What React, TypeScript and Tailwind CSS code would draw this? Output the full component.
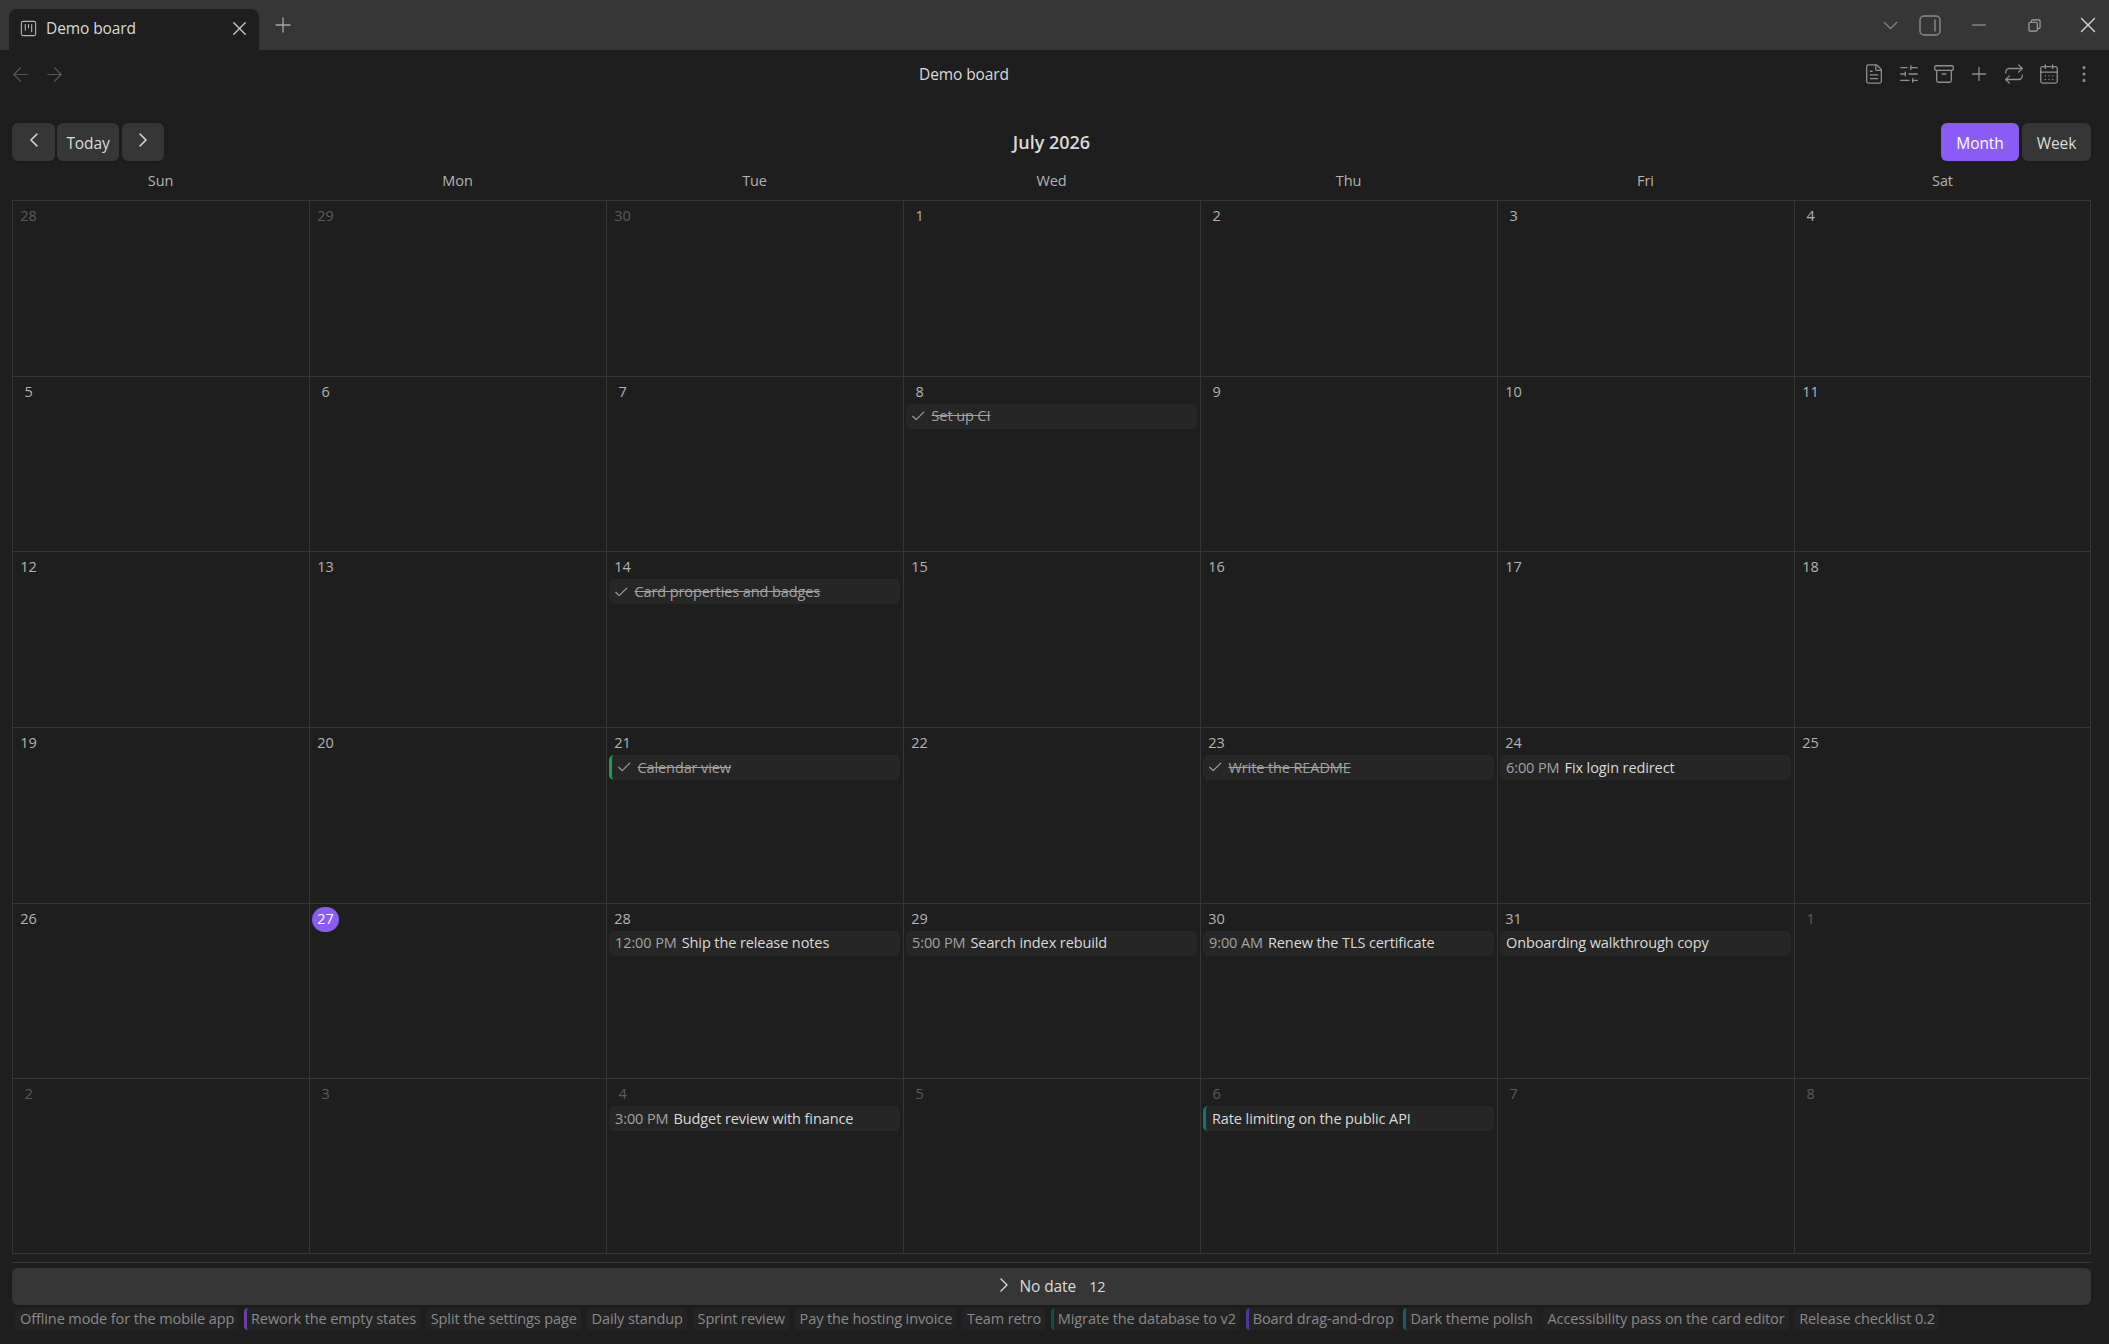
import { useMemo } from "react";
import {
  Archive,
  ArrowLeft,
  ArrowRight,
  CalendarDays,
  Check,
  ChevronDown,
  ChevronLeft,
  ChevronRight,
  EllipsisVertical,
  FileText,
  Minus,
  Plus,
  Repeat,
  SlidersHorizontal,
  SquareKanban,
  X,
} from "lucide-react";

type Task = { title: string; time?: string; done?: boolean; bar?: string };
type Day = { n: number; faded?: boolean; today?: boolean; task?: Task };

const tasks: Record<string, Task> = {
  "7-8": { title: "Set up CI", done: true },
  "7-14": { title: "Card properties and badges", done: true },
  "7-21": { title: "Calendar view", done: true, bar: "border-[#16a34a]" },
  "7-23": { title: "Write the README", done: true },
  "7-24": { title: "Fix login redirect", time: "6:00 PM" },
  "7-28": { title: "Ship the release notes", time: "12:00 PM" },
  "7-29": { title: "Search index rebuild", time: "5:00 PM" },
  "7-30": { title: "Renew the TLS certificate", time: "9:00 AM" },
  "7-31": { title: "Onboarding walkthrough copy" },
  "8-4": { title: "Budget review with finance", time: "3:00 PM" },
  "8-6": { title: "Rate limiting on the public API", bar: "border-[#0f766e]" },
};

const noDate = [
  { title: "Offline mode for the mobile app" },
  { title: "Rework the empty states", bar: "border-[#6b3fa0]" },
  { title: "Split the settings page" },
  { title: "Daily standup" },
  { title: "Sprint review" },
  { title: "Pay the hosting invoice" },
  { title: "Team retro" },
  { title: "Migrate the database to v2", bar: "border-[#134e4a]" },
  { title: "Board drag-and-drop", bar: "border-[#4c3a9a]" },
  { title: "Dark theme polish", bar: "border-[#155e75]" },
  { title: "Accessibility pass on the card editor" },
  { title: "Release checklist 0.2" },
];

const weekdays = ["Sun", "Mon", "Tue", "Wed", "Thu", "Fri", "Sat"];

function buildDays(): Day[] {
  const days: Day[] = [];
  [28, 29, 30].forEach((n) => days.push({ n, faded: true }));
  for (let n = 1; n <= 31; n++) {
    days.push({ n, today: n === 27, task: tasks[`7-${n}`] });
  }
  for (let n = 1; n <= 8; n++) {
    days.push({ n, faded: true, task: tasks[`8-${n}`] });
  }
  return days;
}

function PanelIcon() {
  return (
    <svg width="22" height="21" viewBox="0 0 22 21" fill="none" stroke="#8c8c8c" strokeWidth="1.4">
      <rect x="1" y="1" width="20" height="19" rx="4" />
      <path d="M16 4.5v12" />
    </svg>
  );
}

function RestoreIcon() {
  return (
    <svg width="13" height="13" viewBox="0 0 14 14" fill="none" stroke="#a8a8a8" strokeWidth="1.2">
      <rect x="1" y="3.5" width="9" height="9.5" rx="1.5" />
      <path d="M3.500 3.500V2.500a1.500 1.500 0 0 1 1.500-1.500h6.500A1.500 1.500 0 0 1 13 2.500v6.500a1.500 1.500 0 0 1-1.500 1.500H10" />
    </svg>
  );
}

function TaskChip({ task }: { task: Task }) {
  return (
    <div
      className={`mx-[3px] flex h-[25px] items-center rounded-[5px] bg-[#262626] pl-[6px] ${
        task.bar ? `border-l-[3px] ${task.bar}` : ""
      }`}
    >
      {task.done && <Check size={16.5} strokeWidth={1.6} className="ml-[-2px] mr-[5px] shrink-0 text-[#a3a3a3]" />}
      {task.time && <span className="mr-[5px] text-[#a3a3a3]">{task.time}</span>}
      <span className={task.done ? "text-[#a3a3a3] line-through" : "text-[#dadada]"}>{task.title}</span>
    </div>
  );
}

function DayCell({ day, index }: { day: Day; index: number }) {
  return (
    <div
      className={`min-h-0 border-t border-l border-[#363636] ${index % 7 === 6 ? "border-r" : ""} ${
        index >= 35 ? "border-b" : ""
      }`}
    >
      <div className="flex pl-[2px] pt-[3px]">
        <div
          className={`flex h-[25px] w-[27px] items-center justify-center rounded-full pb-[1px] ${
            day.today ? "bg-[#8a5cf5] text-white" : day.faded ? "text-[#5c5c5c]" : "text-[#b3b3b3]"
          }`}
        >
          {day.n}
        </div>
      </div>
      {day.task && (
        <div className="-ml-px mt-[-1px]">
          <TaskChip task={day.task} />
        </div>
      )}
    </div>
  );
}

export default function App() {
  const days = useMemo(buildDays, []);

  return (
    <div className="flex h-screen w-full flex-col overflow-hidden bg-[#1e1e1e] font-['Open_Sans',sans-serif] text-[14.5px] tracking-[-0.1px] text-[#dadada]">
      {/* title bar */}
      <div className="flex h-[50px] shrink-0 items-end bg-[#363636] pl-[9px]">
        <div className="flex h-[41px] w-[250px] items-center rounded-t-[8px] bg-[#1e1e1e] pb-[2px] pl-[10px] pr-[8px]">
          <SquareKanban size={19} strokeWidth={1.4} className="text-[#b3b3b3]" />
          <span className="ml-[8px] flex-1 text-[15.5px]">Demo board</span>
          <X size={23} strokeWidth={1.4} className="text-[#c8c8c8]" />
        </div>
        <div className="flex h-[50px] w-[48px] items-center justify-center">
          <Plus size={24} strokeWidth={1.3} className="text-[#a8a8a8]" />
        </div>
        <div className="ml-auto flex h-[50px] items-center pr-[8px] text-[#a8a8a8]">
          <ChevronDown size={25} strokeWidth={1.3} className="mr-[16px] text-[#8c8c8c]" />
          <PanelIcon />
          <Minus size={22} strokeWidth={1.3} className="ml-[27px]" />
          <div className="ml-[38px]">
            <RestoreIcon />
          </div>
          <X size={26} strokeWidth={1.3} className="ml-[34px] text-[#d0d0d0]" />
        </div>
      </div>

      {/* note header */}
      <div className="relative flex h-[48px] shrink-0 items-center justify-between pl-[9px] pr-[8px]">
        <div className="flex items-center gap-[11px] text-[#555555]">
          <ArrowLeft size={23} strokeWidth={1.3} />
          <ArrowRight size={23} strokeWidth={1.3} />
        </div>
        <div className="absolute left-[864px] w-[200px] pt-[1px] text-center text-[15.5px]">Demo board</div>
        <div className="flex items-center text-[#8f8f8f]">
          {[FileText, SlidersHorizontal, Archive, Plus, Repeat, CalendarDays, EllipsisVertical].map((Icon, i) => (
            <div key={i} className="flex h-[35px] w-[35px] items-center justify-center">
              <Icon size={22} strokeWidth={1.4} />
            </div>
          ))}
        </div>
      </div>

      {/* calendar */}
      <div className="flex min-h-0 flex-1 flex-col pl-[12px] pr-[18px]">
        <div className="relative mt-[25px] flex h-[38px] shrink-0 items-center justify-between">
          <div className="flex gap-[2px]">
            <button className="flex h-[38px] w-[43px] items-center justify-center rounded-[6px] bg-[#363636] shadow-sm">
              <ChevronLeft size={24} strokeWidth={1.5} className="-translate-y-[2px] text-[#dadada]" />
            </button>
            <button className="h-[38px] w-[62px] rounded-[6px] bg-[#363636] pt-[3px] text-[15.5px] shadow-sm">Today</button>
            <button className="ml-px flex h-[38px] w-[42px] items-center justify-center rounded-[6px] bg-[#363636] shadow-sm">
              <ChevronRight size={24} strokeWidth={1.5} className="-translate-y-[2px] text-[#dadada]" />
            </button>
          </div>
          <div className="absolute inset-x-0 text-center text-[18px] font-semibold tracking-normal">July 2026</div>
          <div className="flex gap-[3px]">
            <button className="h-[38px] w-[78px] rounded-[6px] bg-[#8a5cf5] pt-[3px] text-[15.5px] text-white">Month</button>
            <button className="h-[38px] w-[69px] rounded-[6px] bg-[#363636] pt-[3px] text-[15.5px] shadow-sm">Week</button>
          </div>
        </div>

        <div className="grid h-[39px] shrink-0 grid-cols-7 items-center text-[#b3b3b3]">
          {weekdays.map((d) => (
            <div key={d} className="text-center">
              {d}
            </div>
          ))}
        </div>

        <div className="grid h-[1054px] shrink-0 grid-cols-7 grid-rows-6">
          {days.map((day, i) => (
            <DayCell key={i} day={day} index={i} />
          ))}
        </div>

        {/* no date shelf */}
        <div className="mt-[8px] shrink-0 border-t border-[#363636] pt-[5px]">
          <div className="flex h-[37px] items-center justify-center rounded-[6px] bg-[#363636] pr-[5px] shadow-sm">
            <ChevronRight size={24} strokeWidth={1.4} className="mr-[3px] -translate-y-[2px]" />
            <span className="mr-[13px] text-[15.5px]">No date</span>
            <span>12</span>
          </div>
          <div className="mt-[3px] flex gap-[5.7px] pl-[3px]">
            {noDate.map((t) => (
              <div
                key={t.title}
                className={`flex h-[22px] items-center whitespace-nowrap rounded-[4px] bg-[#232323] pr-[4px] text-[#8a8a8a] ${
                  t.bar ? `border-l-[3px] pl-[4px] ${t.bar}` : "pl-[5px]"
                }`}
              >
                {t.title}
              </div>
            ))}
          </div>
        </div>
      </div>
    </div>
  );
}
